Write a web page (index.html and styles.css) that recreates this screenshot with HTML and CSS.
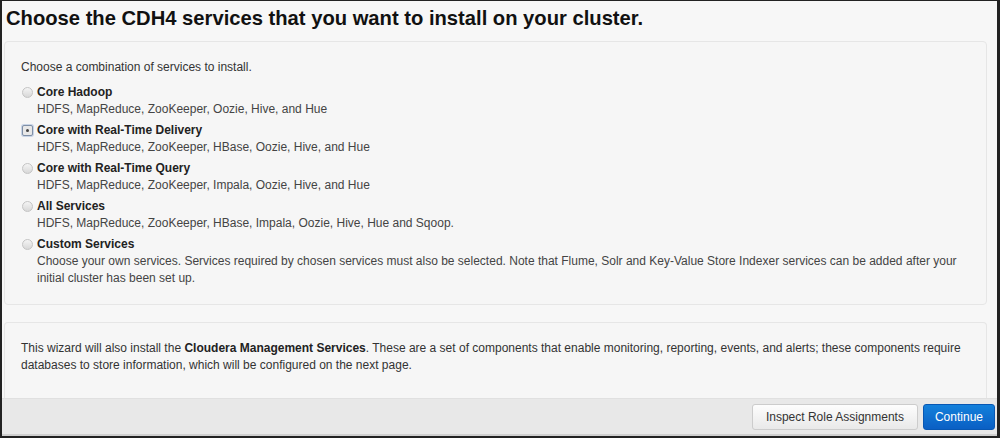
FILE: index.html
```html
<!DOCTYPE html>
<html>
<head>
<meta charset="utf-8">
<link rel="stylesheet" href="styles.css">
</head>
<body>
<div class="frame">
  <div class="content">
    <h1 class="title">Choose the CDH4 services that you want to install on your cluster.</h1>
    <div class="panel">
      <p class="intro">Choose a combination of services to install.</p>
      <div class="option">
        <span class="radio"></span>
        <div class="opt-text">
          <div class="opt-name">Core Hadoop</div>
          <div class="opt-desc">HDFS, MapReduce, ZooKeeper, Oozie, Hive, and Hue</div>
        </div>
      </div>
      <div class="option">
        <span class="radio checked"></span>
        <div class="opt-text">
          <div class="opt-name">Core with Real-Time Delivery</div>
          <div class="opt-desc">HDFS, MapReduce, ZooKeeper, HBase, Oozie, Hive, and Hue</div>
        </div>
      </div>
      <div class="option">
        <span class="radio"></span>
        <div class="opt-text">
          <div class="opt-name">Core with Real-Time Query</div>
          <div class="opt-desc">HDFS, MapReduce, ZooKeeper, Impala, Oozie, Hive, and Hue</div>
        </div>
      </div>
      <div class="option">
        <span class="radio"></span>
        <div class="opt-text">
          <div class="opt-name">All Services</div>
          <div class="opt-desc">HDFS, MapReduce, ZooKeeper, HBase, Impala, Oozie, Hive, Hue and Sqoop.</div>
        </div>
      </div>
      <div class="option">
        <span class="radio"></span>
        <div class="opt-text">
          <div class="opt-name">Custom Services</div>
          <div class="opt-desc">Choose your own services. Services required by chosen services must also be selected. Note that Flume, Solr and Key-Value Store Indexer services can be added after your initial cluster has been set up.</div>
        </div>
      </div>
    </div>
    <div class="panel panel-note">
      <p class="note">This wizard will also install the <b>Cloudera Management Services</b>. These are a set of components that enable monitoring, reporting, events, and alerts; these components require databases to store information, which will be configured on the next page.</p>
    </div>
  </div>
  <div class="footer">
    <button class="btn">Inspect Role Assignments</button>
    <button class="btn btn-primary">Continue</button>
  </div>
</div>
</body>
</html>
```
FILE: styles.css
```css
html, body {
  margin: 0;
  padding: 0;
  background: #f7f7f7;
}
body {
  font-family: "Liberation Sans", Arial, sans-serif;
  color: #333;
  font-size: 12px;
}
.frame {
  box-sizing: border-box;
  width: 1000px;
  height: 438px;
  border-top: 1px solid #222;
  border-left: 2px solid #222;
  border-right: 3px solid #222;
  border-bottom: 2px solid #222;
  display: flex;
  flex-direction: column;
  overflow: hidden;
}
.content {
  flex: 1;
  overflow: hidden;
  padding: 0 10px 0 2px;
}
.title {
  margin: 4px 0 0 2px;
  font-size: 20.2px;
  line-height: 26px;
  font-weight: bold;
  color: #111;
}
.panel {
  margin-top: 10px;
  border: 1px solid #e6e6e6;
  border-radius: 4px;
  background: #f6f6f6;
  padding: 17px 18px 12px 16px;
  height: 233px;
}
.intro {
  margin: 0 0 8px;
  line-height: 17px;
}
.option {
  display: flex;
  align-items: flex-start;
  margin-bottom: 4px;
}
.radio {
  flex: none;
  width: 11px;
  height: 11px;
  border-radius: 50%;
  border: 1px solid #c4c4c4;
  background: linear-gradient(#f4f4f4, #d8d8d8);
  margin: 3px 4px 0 1px;
  box-sizing: border-box;
}
.radio.checked {
  border-radius: 2px;
  border: 1px solid #7f8fa6;
  box-shadow: 0 0 0 1px #c8d4e6;
  background: #e8e8e8;
  position: relative;
}
.radio.checked::after {
  content: "";
  position: absolute;
  left: 3px;
  top: 3px;
  width: 3px;
  height: 3px;
  border-radius: 50%;
  background: #444;
}
.opt-text {
  line-height: 17px;
}
.opt-name {
  font-weight: bold;
  color: #222;
}
.opt-desc {
  color: #444;
}
.panel-note {
  margin-top: 17px;
  height: 80px;
  padding: 17px 18px 0 16px;
  border-bottom: none;
}
.note {
  margin: 0;
  line-height: 17px;
  color: #333;
}
.note b {
  color: #222;
}
.footer {
  flex: none;
  height: 35px;
  background: #e8e8e8;
  border-top: 1px solid #e0e0e0;
  border-bottom: 2px solid #cfcfcf;
  display: flex;
  justify-content: flex-end;
  align-items: center;
  gap: 5px;
  padding-right: 2px;
}
.btn {
  font-family: "Liberation Sans", Arial, sans-serif;
  font-size: 12px;
  height: 26px;
  padding: 0 13px;
  border: 1px solid #ccc;
  border-radius: 3px;
  background: linear-gradient(#fdfdfd, #e9e9e9);
  color: #333;
}
.btn-primary {
  padding: 0 11px;
  background: linear-gradient(#1380db, #0a5fc4);
  border-color: #0857b3;
  color: #fff;
}
```
